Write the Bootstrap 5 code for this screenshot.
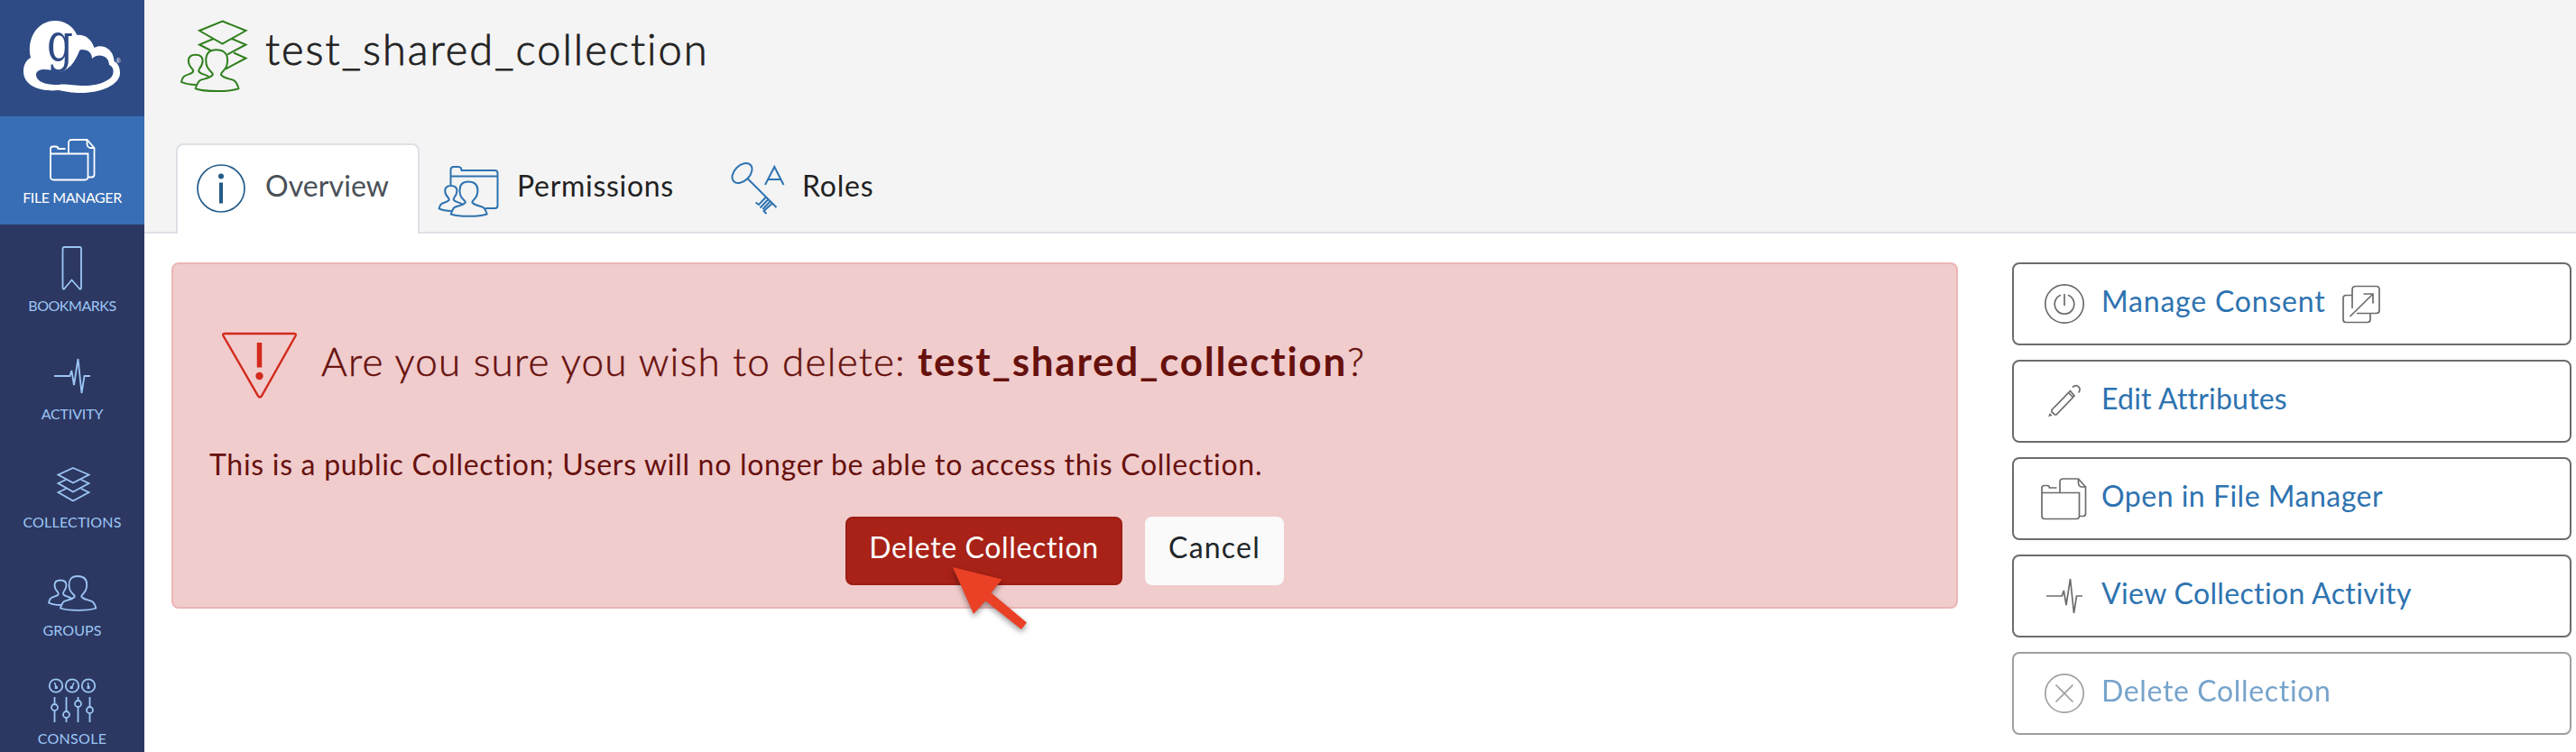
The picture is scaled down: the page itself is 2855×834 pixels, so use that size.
<!DOCTYPE html>
<html lang="en">
<head>
<meta charset="utf-8">
<title>test_shared_collection</title>
<link href="https://cdn.jsdelivr.net/npm/bootstrap@5.3.0/dist/css/bootstrap.min.css" rel="stylesheet">
<style>
  body { font-family: Lato, sans-serif; font-size: 32px; line-height: 48px; color: #222; background: #fff; height: 834px; overflow: hidden; font-variant-ligatures: none; }
  svg { display: block; flex: none; overflow: visible; fill: none; stroke: currentColor; stroke-width: 2; }
  .side-nav { width: 160px; height: 834px; background: #2c3862; overflow: hidden; }
  .brand-box { height: 129px; background: #2e4b86; }
  .side-link { height: 120px; flex: none; color: #9dc6f5; font-size: 16px; line-height: 20px; padding: 15px 0 0; }
  .side-link.active { background: #386eb5; color: #fff; }
  .side-link svg { height: 67px; width: 160px; margin-bottom: -2px; stroke-width: 1.8; }
  .page-head { height: 259px; background: #f4f4f4; border-bottom: 2px solid #dde1e6; padding-left: 35px; }
  .page-title { font-size: 47px; line-height: 60px; font-weight: 300; letter-spacing: 2.02px; -webkit-text-stroke: .8px; margin: 0; padding-top: 4px; }
  .title-row { height: 159px; padding: 20px 0 0 3px; gap: 19px; }
  .tab-row { border: 0; height: 100px; }
  .tab-row .tab-item { height: 100px; color: #222; border: 2px solid transparent; border-bottom: 0; border-radius: 8px 8px 0 0; padding: 0; }
  .tab-row .tab-item.active { background: #fff; border-color: #dde1e6; color: #4a5058; }
  .tab-item svg { color: #2e73b0; }
  .tab-item.active svg { color: #245b87; }
  .tab-item span { padding-bottom: 9px; }
  .content-area { padding: 32px 5px 0 30px; gap: 60px; }
  .confirm-box { width: 1980px; height: 384px; background: #f1cccd; border: 2px solid #edb5b6; border-radius: 8px; color: #67110d; padding: 75px 40px 0; margin: 0; }
  .confirm-title { font-size: 44px; line-height: 60px; font-weight: 300; letter-spacing: 1.2px; -webkit-text-stroke: .5px; margin: 0; padding-top: 2px; }
  .confirm-title strong { font-weight: 700; letter-spacing: 1.75px; -webkit-text-stroke: 0; }
  .btn-big { font-size: 32px; line-height: 48px; height: 76px; padding: 0 0 8px; border-radius: 8px; border: 2px solid; }
  .btn-delete, .btn-delete:hover { width: 307px; background: #a82217; border-color: #9c1e15; color: #fff; letter-spacing: .65px; }
  .btn-cancel, .btn-cancel:hover { width: 154px; background: #fafafa; border-color: #fafafa; color: #212529; letter-spacing: 1.2px; }
  .action-list { width: 620px; gap: 16px; }
  .action-item { height: 92px; border: 2px solid #6c6c6e; border-radius: 8px; padding: 0 0 0 28px; color: #6c6c6e; text-decoration: none; gap: 13px; }
  .action-item span { color: #2e73b0; padding-bottom: 7px; }
  .action-item svg { stroke-width: 1.7; }
  .action-item.off { opacity: .65; }
  .pointer-arrow { position: absolute; left: 1050px; top: 622px; filter: drop-shadow(0 3px 3px rgba(0,0,0,.4)); }
</style>
</head>
<body class="d-flex">

<svg width="0" height="0" class="position-absolute" aria-hidden="true">
  <symbol id="i-folder" viewBox="0 0 52 48" overflow="visible">
    <path d="M2 17.5H43.500V43Q43.500 46.500 40 46.500H5.500Q2 46.500 2 43V12Q2 9.500 5 9.500H7.500Q10.500 9.500 10.500 12H18.500M22 17.500V5.500Q22 2 25.500 2H42.500L50.500 11V40.500Q50.500 43.500 47.500 43.500H44M42.500 2V7Q43 11 46.500 11H50.500"/>
  </symbol>
  <symbol id="i-pulse" viewBox="0 0 40 42" overflow="visible">
    <path d="M0 21H17.300L19.300 15L22 31L26.500 2L30.500 40L33.500 21H40"/>
  </symbol>
  <symbol id="i-people" viewBox="0 0 54 40" overflow="visible">
    <path d="M33 1C39.500 1 43.200 4.500 43.200 10.500C43.200 16.500 41 18.500 38 22C37 23 37 24 38 24.500C41 27.500 46 27.500 49 29Q52 31 53.300 36.500C45 39.600 22 39.600 14 36.500Q15.500 31 18 29C21 27.500 26 27.500 29 24.500C30 24 30 23 29 22C25.500 18.500 23.500 16.500 23.500 10.500C23.500 4.500 26.500 1 33 1Z"/>
    <path d="M14.500 33Q6 33 1 30.500Q2 26 4 25C6.500 23.500 9.500 23.500 11.500 21.500C12.500 20.500 12 20 11 18.500C8.500 16 7.500 14 7.500 11C7.500 7 10 5.500 14 5.500C18.500 5.500 20.500 7.500 20.500 11C20.500 14.500 19.500 16 17.500 18.500C16.500 20 16.500 20.500 17.500 21.500C19.500 23.500 23 23.500 26 25.500"/>
  </symbol>
</svg>

<nav class="side-nav d-flex flex-column flex-shrink-0">
  <a class="brand-box d-block" href="#" aria-label="Home">
    <svg width="160" height="129" viewBox="0 0 160 129" style="stroke:none">
      <path fill="#fff" d="M34 64C29 42 42 23 61 23C72 23 81 29 85.500 39C94 38 101 43 104.500 53C113 48 126 54 126.500 68C131 70 133 75 133 81C133 94 112 103 90 103C80 103 71 101.500 65 100C48 102 26 97 26 79C26 71 30 66 34 64Z"/>
      <path fill="#2e4b86" d="M77 74C83 67 83 55 91 55C98 55 102 59 102 65C109 58 121 62 121 72C127 74 127 83 122 87C114 93 104 95 94 95C82 95 75 93 68 93.500C56 95.500 40 92 40 83C40 75 54 76 64 80C69 80 74 77 77 74Z"/>
      <text x="52" y="67" font-family="DejaVu Serif, serif" font-size="57" fill="#2e4b86" textLength="29" lengthAdjust="spacingAndGlyphs">g</text>
      <path fill="#fff" d="M79.500 40C83 39 86 39 88 41C95 46 84 68 77.500 74Q79 56 79.500 40Z"/>
      <text x="128.500" y="70" font-family="Liberation Sans, sans-serif" font-size="7" fill="#fff">®</text>
    </svg>
  </a>
  <a class="side-link active nav-link d-flex flex-column align-items-center" href="#">
    <svg viewBox="0 0 160 67"><use href="#i-folder" x="54" y="9" width="52" height="48"/></svg>
    <span style="letter-spacing:-.4px">FILE MANAGER</span>
  </a>
  <a class="side-link nav-link d-flex flex-column align-items-center" href="#">
    <svg viewBox="0 0 160 67"><path d="M71.500 10H88Q90 10 90 12V54Q90 58 88 56L79.500 46.500L71.500 56Q69.500 58 69.500 54V12Q69.500 10 71.500 10Z"/></svg>
    <span style="letter-spacing:-.45px">BOOKMARKS</span>
  </a>
  <a class="side-link nav-link d-flex flex-column align-items-center" href="#">
    <svg viewBox="0 0 160 67"><use href="#i-pulse" x="60" y="12" width="40" height="42"/></svg>
    <span style="letter-spacing:-.15px">ACTIVITY</span>
  </a>
  <a class="side-link nav-link d-flex flex-column align-items-center" href="#">
    <svg viewBox="0 0 160 67"><path d="M81 15L98.500 22.500L81 31.500L64.500 22.500ZM73 28L64.500 32L81 41.500L98.500 32L90 28M73 38L64.500 42L81 51.500L98.500 42L90 38"/></svg>
    <span style="letter-spacing:.2px">COLLECTIONS</span>
  </a>
  <a class="side-link nav-link d-flex flex-column align-items-center" href="#">
    <svg viewBox="0 0 160 67"><use href="#i-people" x="53" y="14" width="54" height="40"/></svg>
    <span style="letter-spacing:.1px">GROUPS</span>
  </a>
  <a class="side-link nav-link d-flex flex-column align-items-center" href="#">
    <svg viewBox="0 0 160 67">
      <circle cx="62" cy="16.500" r="7.200"/><circle cx="80" cy="16.500" r="7.200"/><circle cx="98" cy="16.500" r="7.200"/>
      <path d="M60.500 13L62.500 18.500M82 13L79.500 18.500M97.500 13L98 18.500" stroke-width="1.500"/>
      <path d="M62.300 17V20M79.300 17V20M98 17V20" stroke-width="3"/>
      <path d="M60.500 29V36.500M60.500 44.500V57M73.500 29V44.500M73.500 52V57M86.500 29V33M86.500 40V57M99.500 29V40M99.500 47.500V57"/>
      <circle cx="60.500" cy="40.500" r="3.500"/><circle cx="73.500" cy="48.500" r="3.500"/><circle cx="86.500" cy="36.500" r="3.500"/><circle cx="99.500" cy="43.500" r="3.500"/>
    </svg>
    <span style="letter-spacing:.3px">CONSOLE</span>
  </a>
</nav>

<main class="flex-grow-1">
  <header class="page-head">
    <div class="title-row d-flex align-items-start">
      <svg width="77" height="84" viewBox="198 20 77 84" color="#2f7f1d" stroke-width="2">
        <path d="M246.500 23.500L272.500 34L246.500 48.500L221 34ZM236.500 43L221 49.500L233.500 56M257 43L272.500 49.500L252 60.500M259 58.500L272.500 64.500L250 76.500"/>
        <g stroke-width="1.640"><use href="#i-people" x="199.500" y="54" width="66" height="48.500"/></g>
      </svg>
      <h1 class="page-title">test_shared_collection</h1>
    </div>
    <div class="tab-row nav nav-tabs flex-nowrap">
      <a class="tab-item nav-link active d-flex align-items-center" href="#" style="width:270px">
        <svg width="54" height="54" viewBox="0 0 54 54" style="margin:0 22px 2px 21px"><circle cx="27" cy="27" r="26" stroke-width="1.700"/><circle cx="27" cy="13.500" r="3" fill="currentColor" stroke="none"/><path d="M27 20.500V43.500" stroke-width="4"/></svg>
        <span style="letter-spacing:.1px">Overview</span>
      </a>
      <a class="tab-item nav-link d-flex align-items-center" href="#" style="width:312px">
        <svg width="68" height="58" viewBox="485 183 68 58" style="margin:3px 20px 0 18px">
          <path d="M499.500 205V188.500Q499.500 185 503 185H507.500Q511.500 185 511.500 189H548.500Q551.500 189 551.500 192V228Q551.500 231 548.500 231H538M499.500 195.500H551.500"/>
          <use href="#i-people" x="485.500" y="200.500" width="55" height="40.500"/>
        </svg>
        <span style="letter-spacing:.7px">Permissions</span>
      </a>
      <a class="tab-item nav-link d-flex align-items-center" href="#">
        <svg width="60" height="58" viewBox="810 180 60 58" style="margin:0 19px 2px 31px">
          <ellipse cx="822.500" cy="192" rx="13" ry="8.500" transform="rotate(-45 822.500 192)"/>
          <path d="M828.500 198L860.500 230M849 218.500L841 227L837.500 224.500M851 221.500L842.500 230.500M853.500 223.500L845.500 232M856 225.500L846.500 234L849.500 237M848 205L858.300 185L868.500 205M851.500 199H865.500"/>
        </svg>
        <span style="letter-spacing:.8px">Roles</span>
      </a>
    </div>
  </header>

  <div class="content-area d-flex align-items-start">
    <section class="confirm-box alert" role="alert">
      <div class="d-flex" style="padding-left:14px">
        <svg width="83" height="74" viewBox="0 0 83 74" color="#d32a1c" style="margin-right:27px"><path d="M3 2H80Q82.500 2 81.500 4.500L44 71Q42 74 40 71L1.500 4.500Q.500 2 3 2Z" stroke-width="2.400"/><path d="M41.500 12V39.500" stroke-width="5.500"/><circle cx="41.500" cy="49" r="4.200" fill="currentColor" stroke="none"/></svg>
        <h2 class="confirm-title">Are you sure you wish to delete: <strong>test_shared_collection</strong>?</h2>
      </div>
      <p class="m-0" style="letter-spacing:.71px;padding-top:49px">This is a public Collection; Users will no longer be able to access this Collection.</p>
      <div class="d-flex" style="padding:34px 0 0 705px;gap:25px">
        <button type="button" class="btn btn-danger btn-big btn-delete">Delete Collection</button>
        <button type="button" class="btn btn-light btn-big btn-cancel">Cancel</button>
      </div>
    </section>

    <aside class="action-list d-flex flex-column">
      <a class="action-item d-flex align-items-center" href="#">
        <svg width="56" height="56" viewBox="0 0 56 56"><circle cx="28" cy="28" r="21.200"/><path d="M24 18.300A10.800 10.800 0 1 0 32 18.300M28 17V30"/></svg>
        <span style="letter-spacing:.8px">Manage Consent</span>
        <svg width="42" height="42" viewBox="0 0 42 42" style="margin-left:6px"><path d="M15 1.500H37.500Q41 1.500 41 5V28.500Q41 31.500 37.500 31.500H16M11 26V5Q11 1.500 15 1.500M11 11.500H4Q1 11.500 1 15V38.500Q1 41.500 4 41.500H27.500Q31 41.500 31 38.500V31.500M8.500 35L34 10M23.500 10H34V20.500"/></svg>
      </a>
      <a class="action-item d-flex align-items-center" href="#">
        <svg width="56" height="56" viewBox="0 0 56 56"><path d="M34.500 16.500L14 37.500V40L17.500 43H19L39 22ZM32.500 18.500L37.500 23.500M37 12.500C42 8 48 14 43.500 18.500M12 42.500L11.500 44L13 43.500Z"/></svg>
        <span style="letter-spacing:.2px">Edit Attributes</span>
      </a>
      <a class="action-item d-flex align-items-center" href="#">
        <svg width="56" height="56" viewBox="0 0 56 56"><use href="#i-folder" x="1" y="4" width="52" height="48"/></svg>
        <span style="letter-spacing:.5px">Open in File Manager</span>
      </a>
      <a class="action-item d-flex align-items-center" href="#">
        <svg width="56" height="56" viewBox="0 0 56 56"><use href="#i-pulse" x="8" y="7" width="40" height="42"/></svg>
        <span style="letter-spacing:.35px">View Collection Activity</span>
      </a>
      <a class="action-item off d-flex align-items-center" href="#">
        <svg width="56" height="56" viewBox="0 0 56 56"><circle cx="28" cy="28" r="21.200"/><path d="M18.500 18.500L37.500 37.500M37.500 18.500L18.500 37.500"/></svg>
        <span style="letter-spacing:.65px">Delete Collection</span>
      </a>
    </aside>
  </div>
</main>

<svg class="pointer-arrow" width="96" height="80" viewBox="1050 622 96 80" style="stroke:none"><path fill="#ea4026" d="M1056 629L1110.500 642.500L1098.600 657.500L1138 690.500L1132 698L1092.300 666.500L1079 681Z"/></svg>

<script src="https://cdn.jsdelivr.net/npm/bootstrap@5.3.0/dist/js/bootstrap.bundle.min.js"></script>
</body>
</html>
